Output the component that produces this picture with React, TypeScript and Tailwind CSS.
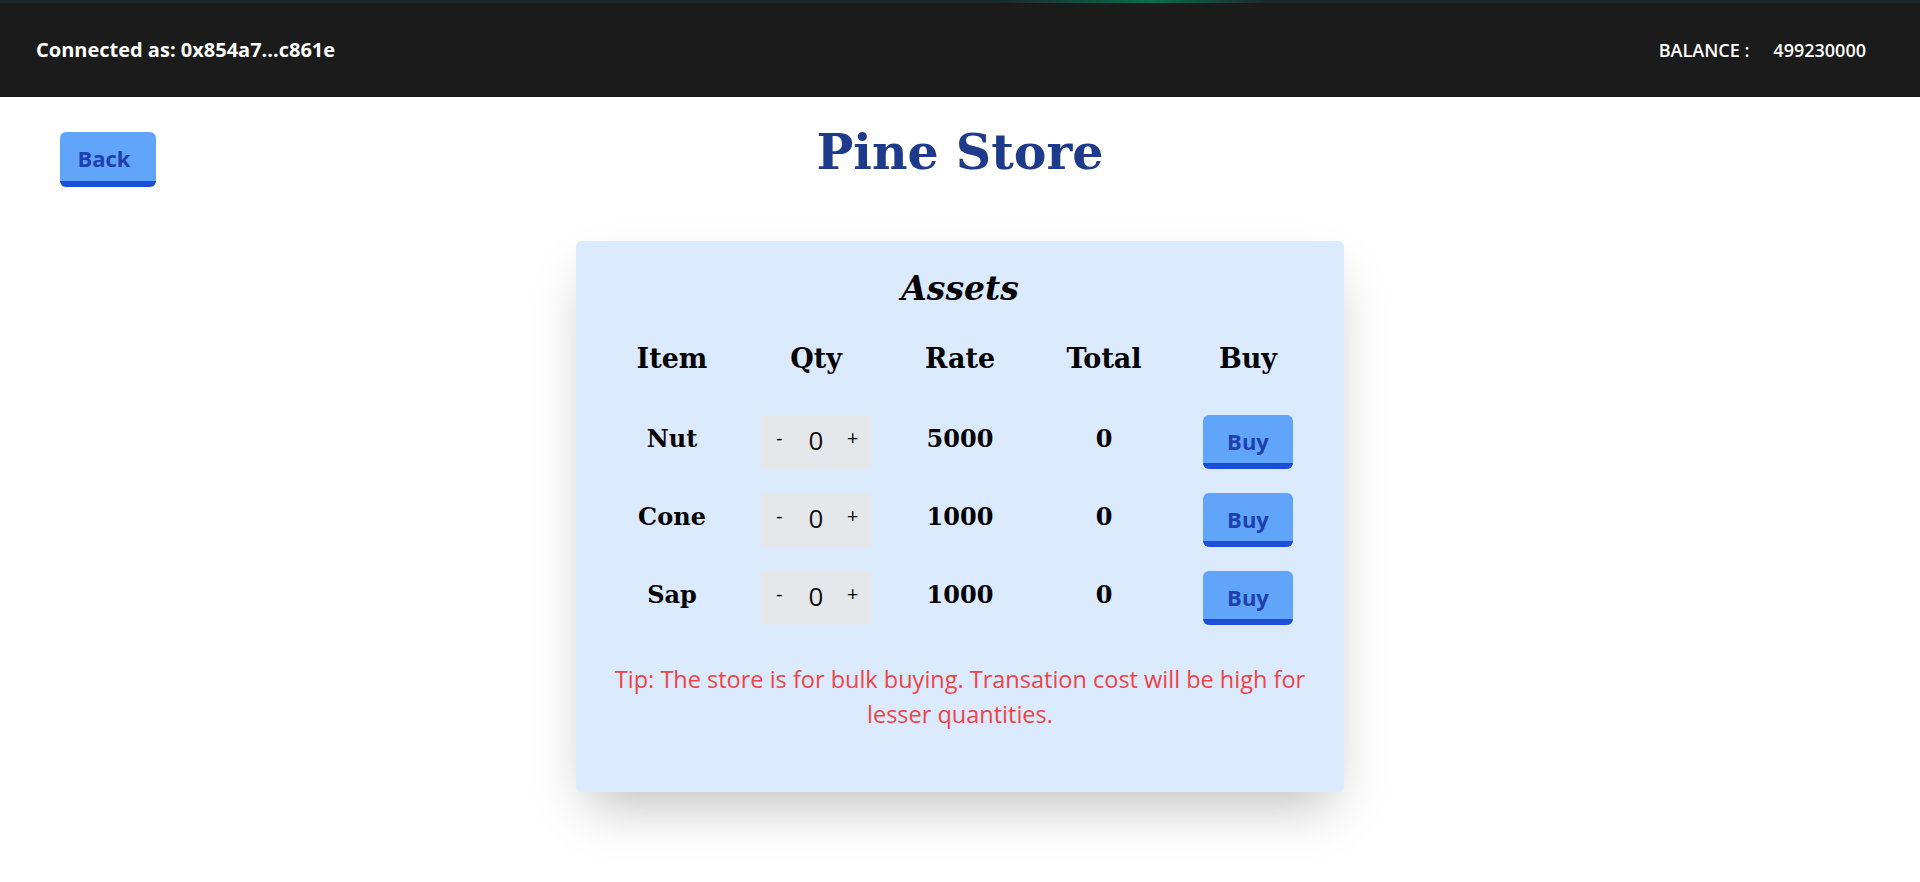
import { useState } from 'react';

const items = [
  { name: 'Nut', rate: 5000 },
  { name: 'Cone', rate: 1000 },
  { name: 'Sap', rate: 1000 },
];

const serif = "font-['DejaVu_Serif',Georgia,serif]";

const Header = () => {
  return (
    <div className="h-[97px] flex flex-col bg-[#1b1b1b]">
      <div className="h-[3px] bg-[linear-gradient(to_right,#1a292c_0%,#1a292c_52%,#0e6a4a_60%,#1a292c_66%,#1a292c_100%)]" />
      <div className="flex-1 flex items-center justify-between pl-9 pr-[54px] text-white">
        <p className="text-xl font-bold">Connected as: 0x854a7...c861e</p>
        <p className="text-lg font-semibold">
          BALANCE :<span className="ml-6">499230000</span>
        </p>
      </div>
    </div>
  );
};

const Row = ({ name, rate }: { name: string; rate: number }) => {
  const [qty, setQty] = useState(0);

  return (
    <div className="grid grid-cols-5 h-[54px] items-center text-center">
      <div className={`${serif} text-2xl font-bold pb-[7px]`}>{name}</div>
      <div className="mx-auto w-[110px] h-[54px] bg-[#e5e7eb] grid grid-cols-3 items-center">
        <button className="text-xl leading-none pb-2" onClick={() => setQty(Math.max(0, qty - 1))}>
          -
        </button>
        <span className="text-[26px] leading-none font-normal text-[#111] pb-1">{qty}</span>
        <button className="text-xl leading-none pb-2" onClick={() => setQty(qty + 1)}>
          +
        </button>
      </div>
      <div className={`${serif} text-2xl font-bold pb-[7px]`}>{rate}</div>
      <div className={`${serif} text-2xl font-bold pb-[7px]`}>{qty * rate}</div>
      <div>
        <button className="mx-auto w-[90px] h-[54px] pt-1 rounded-md bg-[#60a5fa] border-b-[6px] border-[#1d4ed8] text-[#1e40af] text-[22px] font-bold flex items-center justify-center">
          Buy
        </button>
      </div>
    </div>
  );
};

const App = () => {
  return (
    <div className="min-h-screen bg-white font-['Open_Sans',sans-serif]">
      <Header />

      <div className="grid grid-cols-[1fr_auto_1fr] h-[144px] items-start">
        <div>
          <button className="ml-[60px] mt-[35px] w-[96px] h-[55px] pt-1 pr-2 rounded-md bg-[#60a5fa] border-b-[6px] border-[#1d4ed8] text-[#1e40af] text-[22px] font-bold flex items-center justify-center">
            Back
          </button>
        </div>
        <h1 className={`${serif} mt-[31px] text-[49px] leading-none font-bold text-[#1e3a8a]`}>
          Pine Store
        </h1>
        <div />
      </div>

      <div className="mx-auto w-[768px] bg-[#dbeafe] rounded-md shadow-2xl px-6 pt-6 pb-[60px]">
        <h2 className={`${serif} text-center italic font-bold text-[33px] leading-[48px]`}>
          Assets
        </h2>

        <div className={`${serif} grid grid-cols-5 mt-[19px] h-[54px] items-center text-center text-[27px] font-bold`}>
          <div>Item</div>
          <div>Qty</div>
          <div>Rate</div>
          <div>Total</div>
          <div>Buy</div>
        </div>

        <div className="flex flex-col gap-6 mt-[29px]">
          {items.map((item) => (
            <Row key={item.name} name={item.name} rate={item.rate} />
          ))}
        </div>

        <p className="mt-[37px] text-center text-[#ef4444] text-[23.5px] leading-[35px]">
          Tip: The store is for bulk buying. Transation cost will be high for
          <br />
          lesser quantities.
        </p>
      </div>
    </div>
  );
};

export default App;
